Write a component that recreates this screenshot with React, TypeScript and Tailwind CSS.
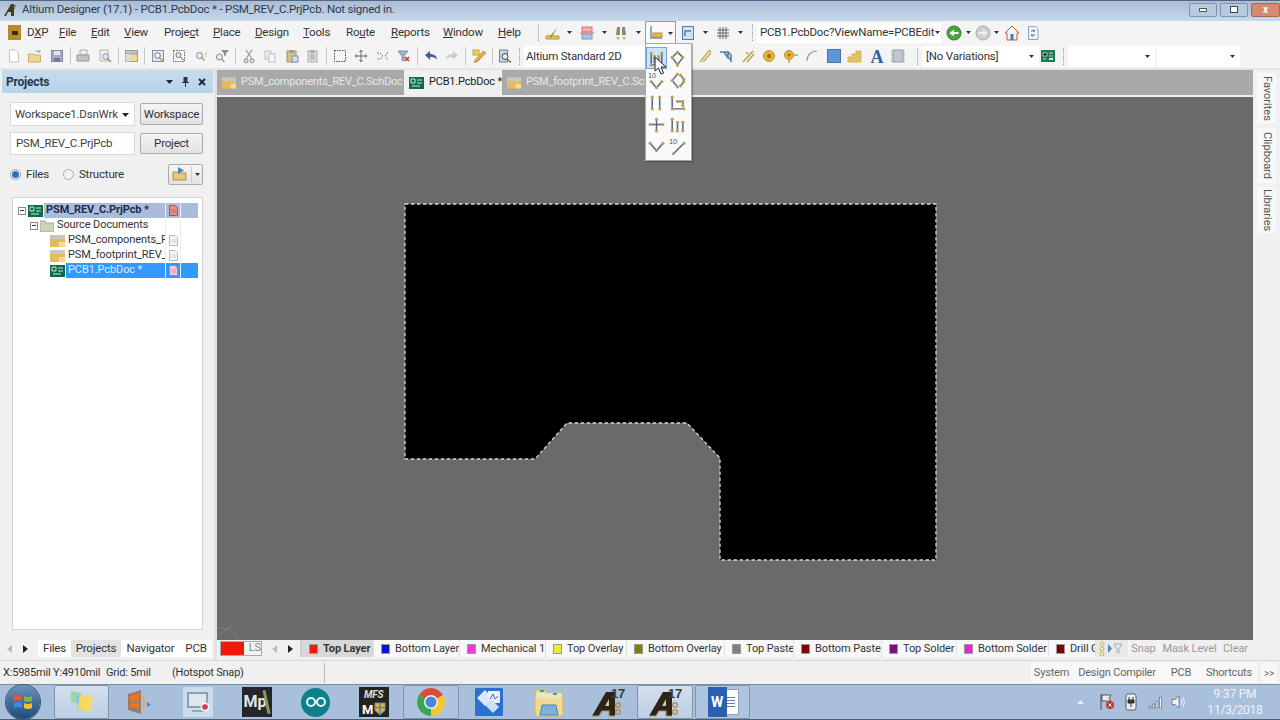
import type { ReactNode } from "react";

const ink = "text-[#3f3f3f]";

function Svg({ s = 16, children }: { s?: number; children: ReactNode }) {
  return (
    <svg width={s} height={s} viewBox="0 0 16 16" className="shrink-0">
      {children}
    </svg>
  );
}

function Arrow() {
  return (
    <svg width="5" height="3" viewBox="0 0 5 3" className="shrink-0">
      <path d="M0 0h5L2.5 3z" fill="#333" />
    </svg>
  );
}

function Grip() {
  return <div className="mx-[3px] h-[17px] w-[2px] shrink-0 border-l border-dotted border-[#9a9a9a]" />;
}

function Sep() {
  return <div className="mx-[2px] h-[18px] w-px shrink-0 bg-[#c8c8c8]" />;
}

const icons: Record<string, ReactNode> = {
  doc: <path d="M3.500 2h6l3 3v9h-9z" fill="#fff" stroke="#c4c4c4" />,
  open: (
    <>
      <path d="M1.500 6h5l1 1h6v7h-12z" fill="#ecd79a" stroke="#c9ab62" />
      <path d="M8 4q3-3 5 0m0-2v2h-2" fill="none" stroke="#9a9a9a" />
    </>
  ),
  save: (
    <>
      <rect x="2.500" y="2.500" width="11" height="11" fill="#a3acc2" stroke="#7f89a3" />
      <rect x="5" y="3" width="6" height="4" fill="#e4e7ee" />
      <rect x="5" y="10" width="6" height="3" fill="#6f7a95" />
    </>
  ),
  print: (
    <>
      <path d="M5 2h7v5H5z" fill="#eee" stroke="#aaa" />
      <path d="M2 7h12v6H2z" fill="#c4c4c4" stroke="#969696" />
    </>
  ),
  preview: (
    <>
      <path d="M3 2h8v11H3z" fill="#f6f6f6" stroke="#b0b0b0" />
      <circle cx="8.500" cy="8.500" r="3" fill="#d5e4ee" stroke="#8a9aa8" />
      <path d="M10.500 10.500l3.500 3.500" stroke="#a08f5a" strokeWidth="1.500" />
    </>
  ),
  folderdoc: (
    <>
      <rect x="2.500" y="2.500" width="12" height="11" fill="#f3da8c" stroke="#999" />
      <rect x="2.500" y="2.500" width="12" height="3.500" fill="#c4c4c4" stroke="#999" />
      <rect x="2.500" y="6" width="5" height="7.500" fill="#ddd" />
    </>
  ),
  zoomfit: (
    <>
      <rect x="2.500" y="2.500" width="11" height="11" fill="#e3e8f4" stroke="#7f90ac" />
      <circle cx="7.500" cy="7.500" r="2.800" fill="#f4f4f4" stroke="#777" />
      <path d="M9.500 9.500l3.500 3.500" stroke="#a8a04a" strokeWidth="1.400" />
    </>
  ),
  zoomsel: (
    <>
      <rect x="2.500" y="2.500" width="11" height="11" fill="none" stroke="#666" strokeDasharray="1.500 1" />
      <circle cx="7.500" cy="7" r="2.500" fill="#dde8ee" stroke="#777" />
      <path d="M9.500 9l3 3" stroke="#a8a04a" strokeWidth="1.400" />
    </>
  ),
  zoom: (
    <>
      <circle cx="6.500" cy="7.500" r="3" fill="#e6edf2" stroke="#888" />
      <path d="M8.500 9.500l3 3" stroke="#a8a04a" strokeWidth="1.400" />
      <path d="M13 4v1M13 8v1M12 6.500h2" stroke="#a8c07a" />
    </>
  ),
  zoomf: (
    <>
      <circle cx="5.500" cy="9" r="3" fill="#e6edf2" stroke="#888" />
      <path d="M7.500 11l3 3" stroke="#a8a04a" strokeWidth="1.400" />
      <path d="M7 2h8l-3 3.500V8l-2-.8V5.500z" fill="#8f8f8f" />
    </>
  ),
  cut: <path d="M5 2l5.500 8M11 2l-5.500 8M5 11a1.800 1.800 0 1 0 .1 0M11 11a1.800 1.800 0 1 0 .1 0" fill="none" stroke="#9a9a9a" strokeWidth="1.300" />,
  copy: (
    <>
      <rect x="3" y="3" width="6" height="8" fill="#eee" stroke="#c0c0c0" />
      <rect x="7" y="6" width="6" height="8" fill="#f6f6f6" stroke="#c0c0c0" />
    </>
  ),
  paste: (
    <>
      <rect x="3" y="3" width="9" height="11" fill="#d6c28a" stroke="#a29468" />
      <rect x="5.500" y="2" width="4" height="3" fill="#9a9a9a" />
      <rect x="8" y="8" width="6" height="6" fill="#d3deee" stroke="#7f92b0" />
    </>
  ),
  paste2: (
    <>
      <rect x="3" y="3" width="9" height="11" fill="#dcdcdc" stroke="#b0b0b0" />
      <rect x="5.500" y="2" width="4" height="3" fill="#aaa" />
      <path d="M5 7h5M5 9h5M5 11h5" stroke="#a0a0a0" />
    </>
  ),
  select: <rect x="2.500" y="2.500" width="11" height="11" fill="none" stroke="#555" strokeDasharray="1.500 1" />,
  move: <path d="M8 2v12M2 8h12M8 2L6.500 4M8 2l1.500 2M8 14l-1.500-2M8 14l1.500-2M2 8l2-1.500M2 8l2 1.500M14 8l-2-1.500M14 8l-2 1.500" fill="none" stroke="#5d6c80" />,
  cross: <path d="M2 5h3l3 3-3 3H2M13 4L10 8l3 4" fill="none" stroke="#777" strokeDasharray="2 1" />,
  filterx: (
    <>
      <path d="M2 3h10L8 8v5l-2-1V8z" fill="#a4b4cc" stroke="#8090a8" />
      <path d="M9 9l4 4M13 9l-4 4" stroke="#c33" strokeWidth="1.500" />
    </>
  ),
  undo: <path d="M2 7l5-4v3c4 0 7 2 7 6-2-3-4-3-7-3v3z" fill="#3f6291" />,
  redo: <path d="M14 7L9 3v3c-4 0-7 2-7 6 2-3 4-3 7-3v3z" fill="#c8ccd2" />,
  pencil: (
    <>
      <rect x="2" y="2" width="6" height="5" fill="#e9d36a" stroke="#c2a53a" />
      <path d="M12.500 3l2 2-8 8.500-3 1 1-3z" fill="#eeb04a" stroke="#c5842a" />
    </>
  ),
  board: (
    <>
      <path d="M2.500 2h8v12h-8z" fill="#cfd8e6" stroke="#6c7a90" />
      <circle cx="8" cy="8.500" r="3" fill="#e2ecf2" stroke="#445" />
      <path d="M10 11l4 3.500" stroke="#8a6a2a" strokeWidth="1.500" />
    </>
  ),
  check: (
    <>
      <path d="M2 14h13v-3H2z" fill="#e6c55a" stroke="#b0953a" />
      <path d="M2 6l4 5L14 2l-7 11z" fill="#7ea52c" />
    </>
  ),
  rows: (
    <>
      <rect x="3" y="2" width="10" height="5" fill="#f0b0b0" stroke="#c77" />
      <rect x="3" y="9" width="10" height="5" fill="#a9c4e4" stroke="#7a9ac4" />
      <path d="M1 8h14" stroke="#d66" />
    </>
  ),
  binoc: (
    <>
      <path d="M4 2h3v8H3zM9 2h3l1 8H9z" fill="#8a8a70" />
      <circle cx="5" cy="13" r="1.500" fill="#c9b26d" />
      <circle cx="11" cy="13" r="1.500" fill="#c9b26d" />
    </>
  ),
  ruler: (
    <>
      <path d="M3 1v12h11" fill="none" stroke="#6f8fb3" strokeWidth="1.500" />
      <rect x="5" y="8" width="9" height="4" fill="#e8b94e" stroke="#b98f2d" />
    </>
  ),
  stack: (
    <>
      <rect x="2.500" y="1.500" width="11" height="13" fill="#cfe0f2" stroke="#4f7fb5" />
      <path d="M5 11V6h6" fill="none" stroke="#4f7fb5" strokeWidth="1.500" />
    </>
  ),
  hash: <path d="M5 2v12M8 2v12M11 2v12M2 5h12M2 8h12M2 11h12" stroke="#666" />,
  back: (
    <>
      <circle cx="8" cy="8" r="7" fill="#4ca342" stroke="#2f7a2a" />
      <path d="M3.500 8L8 4.500V7h4.500v2H8v2.500z" fill="#fff" />
    </>
  ),
  fwd: (
    <>
      <circle cx="8" cy="8" r="7" fill="#d0d0d0" stroke="#aaa" />
      <path d="M12.500 8L8 4.500V7H3.500v2H8v2.500z" fill="#f2f2f2" />
    </>
  ),
  home: (
    <>
      <path d="M8 1L1 8h2v7h10V8h2z" fill="#f4f4f4" stroke="#c25a2a" />
      <rect x="6.500" y="9" width="3" height="6" fill="#3a7dc0" />
    </>
  ),
  refresh: (
    <>
      <path d="M3.500 1.500h7l2.500 2.500v10.500h-9.500z" fill="#f2f6fb" stroke="#7fa5cc" />
      <path d="M6 6h4L8 4.500M10 10H6l2 1.500" fill="none" stroke="#3a6ea5" />
    </>
  ),
  routeA: <path d="M3 14L12 3M6 14l8-9M12 2l2 2" fill="none" stroke="#c9a94e" strokeWidth="1.500" />,
  routeB: <path d="M2 4h8l3 3v7M10 3v6l3 3M6 4l4 6" fill="none" stroke="#4a7fb5" strokeWidth="1.600" />,
  routeC: <path d="M3 14L13 3M7 14l7-8M6 4l2 2" fill="none" stroke="#b7a34b" strokeWidth="1.600" />,
  pad: (
    <>
      <circle cx="8" cy="8" r="5.500" fill="#e2b32e" stroke="#c09a2a" />
      <circle cx="8" cy="8" r="2" fill="#a06a2a" />
    </>
  ),
  via: (
    <>
      <circle cx="6" cy="7" r="4.500" fill="#e2b32e" stroke="#b8902a" />
      <circle cx="6" cy="7" r="1.500" fill="#a06a2a" />
      <path d="M10 7h5M6 11v4" stroke="#c9a23a" strokeWidth="1.500" />
    </>
  ),
  arc: <path d="M3 13C3 7 7 3 13 3" fill="none" stroke="#99a" strokeWidth="1.200" />,
  fill: <rect x="1.500" y="1.500" width="13" height="13" fill="#5f96d4" stroke="#4477aa" />,
  poly: <path d="M1 14V9h4V6h4V3h5v11z" fill="#e4c164" stroke="#d0a948" strokeDasharray="2 .6" />,
  text: <text x="8" y="15" fontSize="18" fontWeight="700" textAnchor="middle" fill="#2f62a8" fontFamily="Liberation Serif">A</text>,
  chip: (
    <>
      <rect x="3" y="2" width="10" height="12" fill="#bfc6cf" stroke="#8f98a3" />
      <path d="M1 4h2M1 7h2M1 10h2M1 13h2M13 4h2M13 7h2M13 10h2M13 13h2" stroke="#9aa" />
    </>
  ),
  pcb: (
    <>
      <rect x="1" y="2" width="14" height="12" fill="#1f7a55" />
      <path d="M3 5h4v3H3zM9 5h4M9 8h4M3 11h3" stroke="#a8e0b8" />
      <rect x="9" y="10" width="4" height="2" fill="#ddd" />
    </>
  ),
};

function Ic({ k, w = "w-[21.5px]" }: { k: string; w?: string }) {
  return (
    <div className={`flex shrink-0 items-center justify-center ${w}`}>
      <Svg>{icons[k]}</Svg>
    </div>
  );
}

function Menu({ first, rest, pre = "", w }: { first: string; rest: string; pre?: string; w: string }) {
  return (
    <span className={`shrink-0 ${w}`}>
      {pre}
      <span className="underline underline-offset-1">{first}</span>
      {rest}
    </span>
  );
}

function FolderIcon({ w = 15 }: { w?: number }) {
  return (
    <svg width={w} height="12" viewBox="0 0 15 12" className="shrink-0">
      <rect width="15" height="12" fill="#e2bb5c" />
      <rect x="0" y="0" width="15" height="4" fill="#c9c6bd" />
      <rect x="9" y="7" width="6" height="5" fill="#f2d995" />
    </svg>
  );
}

function PcbIcon() {
  return (
    <svg width="15" height="12" viewBox="0 0 15 12" className="shrink-0">
      <rect width="15" height="12" fill="#0f6a4c" />
      <path d="M2 2h4v4H2zM8 3h5M8 6h5M3 9h8" stroke="#bff0cf" fill="none" />
    </svg>
  );
}

function DocTab({ label, active, w }: { label: string; active?: boolean; w: string }) {
  return (
    <div
      className={`flex h-full shrink-0 items-center gap-[5px] overflow-hidden whitespace-nowrap ${w} ${active ? "bg-[#f0f0f0] pl-[5px] text-[#222]" : "pl-[5px] text-[#e8e8e8]"}`}
    >
      {active ? <PcbIcon /> : <FolderIcon w={14} />}
      {label}
    </div>
  );
}

function PagedDoc({ fill, line }: { fill: string; line: string }) {
  return (
    <svg width="9" height="11" viewBox="0 0 9 11">
      <path d="M.5.5h5.500l2.500 2.500v7.500H.5z" fill={fill} stroke={line} />
      <path d="M2 5h5M2 7h5" stroke={line} strokeWidth=".6" />
    </svg>
  );
}

function TreeRow({ indent, expander, icon, label, sel, active, doc, bold }: { indent: string; expander?: boolean; icon: ReactNode; label: string; sel?: boolean; active?: boolean; doc?: ReactNode; bold?: boolean }) {
  const bg = active ? "bg-[#3399ff]" : sel ? "bg-[#aabbdc]" : "";
  return (
    <div className="flex h-[15px] items-center">
      <div className={`flex h-full w-[147px] items-center overflow-hidden whitespace-nowrap ${indent}`}>
        {expander && (
          <div className="mr-[2px] flex h-[8px] w-[8px] shrink-0 items-center justify-center border border-[#8a8a8a] bg-white">
            <div className="h-px w-[4px] bg-[#333]" />
          </div>
        )}
        {icon}
        <div className={`ml-[1px] flex h-[15px] flex-1 items-center pl-[2px] ${bold ? "font-bold text-[#1d2a4d]" : ""} ${active ? "text-[#d6ecff]" : ""} ${bg}`}>
          {label}
        </div>
      </div>
      <div className={`flex h-full w-[16px] items-center justify-center border-x border-[#ececec] ${bg}`}>{doc}</div>
      <div className={`h-full w-[17px] ${bg}`} />
    </div>
  );
}

function LayerTab({ color, label, w, active }: { color: string; label: string; w: string; active?: boolean }) {
  return (
    <div
      className={`flex h-full shrink-0 items-center gap-[5px] overflow-hidden whitespace-nowrap border-r border-[#e2e2e2] pl-[7px] ${w} ${active ? "bg-[#d8d8d8] font-bold" : "bg-[#f8f8f8]"}`}
    >
      <div className="h-[10px] w-[9px] shrink-0 border border-[#999]" style={{ backgroundColor: color }} />
      <span className="pt-px">{label}</span>
    </div>
  );
}

function Nav() {
  return (
    <div className="flex shrink-0 items-center gap-[11px]">
      <svg width="5" height="8" viewBox="0 0 5 8"><path d="M5 0v8L0 4z" fill="#bbb" /></svg>
      <svg width="5" height="8" viewBox="0 0 5 8"><path d="M0 0v8l5-4z" fill="#222" /></svg>
    </div>
  );
}

function TaskBtn({ w, look, children }: { w: string; look?: "active" | "open"; children: ReactNode }) {
  return (
    <div
      className={`flex h-full shrink-0 items-center justify-center ${w} ${look === "active" ? "rounded-[2px] border border-[#7f94ad] bg-gradient-to-b from-[#d4dfec] to-[#bccfe3]" : look === "open" ? "rounded-[2px] border border-[#7f94ad] bg-[#afc5df]" : ""}`}
    >
      {children}
    </div>
  );
}

function A17() {
  return (
    <svg width="36" height="32" viewBox="0 0 36 32">
      <path d="M2 30L16 6h9v24h-6v-5h-7l-3 5z" fill="#2d2415" />
      <path d="M15 20h4v-7z" fill="#cfc6ac" />
      <path d="M2 30h7l3-5h7v5h6" fill="none" stroke="#a8935a" strokeWidth="1.200" />
      <text x="21" y="12" fontSize="13" fontWeight="700" fill="#3c3c3c" fontFamily="Liberation Sans">17</text>
      <circle cx="28" cy="19" r="2.300" fill="none" stroke="#a8935a" strokeWidth="1.500" />
      <circle cx="28" cy="26" r="2.300" fill="none" stroke="#a8935a" strokeWidth="1.500" />
    </svg>
  );
}

function Pop({ children, active }: { children: ReactNode; active?: boolean }) {
  return (
    <div className={`flex h-[22px] w-[21px] items-center justify-center ${active ? "border border-[#6fa5d8] bg-[#cfe4f7]" : ""}`}>
      {children}
    </div>
  );
}

function Track({ d, tag }: { d: string; tag?: boolean }) {
  const pts = [...d.matchAll(/[ML](\d+) (\d+)/g)].map((m) => [Number(m[1]), Number(m[2])]);
  return (
    <Svg s={17}>
      <path d={d} fill="none" stroke="#56667c" strokeWidth="1.400" />
      {pts.map(([x, y], i) => (
        <circle key={i} cx={x} cy={y} r="1.500" fill="#b9a25f" />
      ))}
      {tag && (
        <text x="0" y="6" fontSize="7" fill="#555" fontFamily="Liberation Sans">10</text>
      )}
    </Svg>
  );
}

export default function App() {
  return (
    <div className="relative flex h-[720px] w-[1280px] flex-col overflow-hidden bg-[#f0f0f0] font-['Roboto',sans-serif] text-[11.5px] tracking-[-0.2px] text-[#333]">
      {/* Title bar */}
      <header className="flex h-[21px] shrink-0 items-center justify-between border-t border-[#55667d] bg-gradient-to-b from-[#a8bcd6] to-[#c8d9ea] pb-[3px] pl-[4px] pr-0">
        <div className="flex items-center gap-[4px]">
          <svg width="14" height="14" viewBox="0 0 14 14" className="shrink-0">
            <path d="M0 13L7 1h3v12H7V9H4l-2 4z" fill="#4a3a20" />
            <text x="9" y="6" fontSize="6" fill="#333">7</text>
          </svg>
          <span className="text-[#2c3a4c]">Altium Designer (17.1) - PCB1.PcbDoc * - PSM_REV_C.PrjPcb. Not signed in.</span>
        </div>
        <div className="flex items-center gap-[3px]">
          <div className="flex h-[14px] w-[28px] items-center justify-center rounded-[2px] border border-[#7f93ab] bg-[#b8cade]">
            <div className="h-[4px] w-[8px] border border-[#556] bg-white" />
          </div>
          <div className="flex h-[14px] w-[28px] items-center justify-center rounded-[2px] border border-[#7f93ab] bg-[#b8cade]">
            <div className="h-[7px] w-[8px] border border-[#445] bg-white" />
          </div>
          <div className="flex h-[14px] w-[29px] items-center justify-center rounded-[2px] border border-[#a06a50] bg-[#d68a6f] text-[10px] font-bold leading-none text-white">x</div>
        </div>
      </header>

      {/* Menu bar */}
      <div className="flex h-[23px] shrink-0 items-center bg-[#f4f4f4] pl-[8px]">
        <div className="mr-[6px] flex h-[15px] w-[13px] shrink-0 items-center justify-center bg-[#b98a2c]">
          <div className="h-[4px] w-[6px] bg-[#3d2b10]" />
        </div>
        <span className="w-[32px] shrink-0">D<span className="underline underline-offset-1">X</span>P</span>
        <Menu w="w-[32px]" first="F" rest="ile" />
        <Menu w="w-[33px]" first="E" rest="dit" />
        <Menu w="w-[40px]" first="V" rest="iew" />
        <Menu w="w-[49px]" pre="Proje" first="c" rest="t" />
        <Menu w="w-[42px]" first="P" rest="lace" />
        <Menu w="w-[48px]" first="D" rest="esign" />
        <Menu w="w-[43px]" first="T" rest="ools" />
        <Menu w="w-[45px]" pre="Ro" first="u" rest="te" />
        <Menu w="w-[52px]" first="R" rest="eports" />
        <Menu w="w-[55px]" first="W" rest="indow" />
        <Menu w="w-[37px]" first="H" rest="elp" />
        <Grip />
        <Ic k="check" w="w-[18px]" />
        <div className="mx-[6px]"><Arrow /></div>
        <Ic k="rows" w="w-[18px]" />
        <div className="mx-[5.500px]"><Arrow /></div>
        <Ic k="binoc" w="w-[18px]" />
        <div className="ml-[6px] mr-[4px]"><Arrow /></div>
        <div className="flex h-[23px] w-[31px] shrink-0 items-center gap-[3px] border-x border-t border-[#999] bg-[#f8f8f8] pl-[1px]">
          <Ic k="ruler" w="w-[18px]" />
          <Arrow />
        </div>
        <div className="w-[3px]" />
        <Ic k="stack" w="w-[18px]" />
        <div className="mx-[6px]"><Arrow /></div>
        <Ic k="hash" w="w-[18px]" />
        <div className="mx-[6px]"><Arrow /></div>
        <Grip />
        <div className="flex h-[20px] w-[184px] shrink-0 items-center justify-between bg-white pl-[3px] pr-[1px]">
          <span className="whitespace-nowrap">PCB1.PcbDoc?ViewName=PCBEdit</span>
          <Arrow />
        </div>
        <div className="w-[4px]" />
        <Ic k="back" w="w-[18px]" />
        <div className="mx-[3px]"><Arrow /></div>
        <Ic k="fwd" w="w-[18px]" />
        <div className="mx-[2px]"><Arrow /></div>
        <div className="w-[2px]" />
        <Ic k="home" w="w-[18px]" />
        <div className="w-[3px]" />
        <Ic k="refresh" w="w-[18px]" />
      </div>

      {/* Main toolbar */}
      <div className="flex h-[24px] shrink-0 items-center bg-[#f4f4f4] pl-[3px]">
        <Ic k="doc" />
        <Ic k="open" />
        <Ic k="save" />
        <Sep />
        <Ic k="print" />
        <Ic k="preview" />
        <Sep />
        <Ic k="folderdoc" />
        <Sep />
        <Ic k="zoomfit" />
        <Ic k="zoomsel" />
        <Ic k="zoom" />
        <Ic k="zoomf" />
        <Sep />
        <Ic k="cut" />
        <Ic k="copy" />
        <Ic k="paste" />
        <Ic k="paste2" />
        <Sep />
        <Ic k="select" />
        <Ic k="move" />
        <Ic k="cross" />
        <Ic k="filterx" />
        <Sep />
        <Ic k="undo" />
        <Ic k="redo" />
        <Sep />
        <Ic k="pencil" />
        <Sep />
        <Ic k="board" />
        <Grip />
        <div className="flex h-[21px] w-[161px] shrink-0 items-center bg-white pl-[2px] pt-px">Altium Standard 2D</div>
        <div className="w-[9px]" />
        <Ic k="routeA" />
        <Ic k="routeB" />
        <Ic k="routeC" />
        <Ic k="pad" />
        <Ic k="via" />
        <Ic k="arc" />
        <Ic k="fill" />
        <Ic k="poly" />
        <Ic k="text" />
        <Ic k="chip" />
        <div className="w-[5px]" />
        <Grip />
        <div className="flex h-[21px] w-[117px] shrink-0 items-center justify-between bg-white pl-[4px] pr-[5px] pt-px">
          [No Variations]
          <Arrow />
        </div>
        <Ic k="pcb" w="w-[18px]" />
        <div className="w-[3px]" />
        <Grip />
        <div className="flex h-[21px] w-[87px] shrink-0 items-center justify-end bg-white pr-[5px]"><Arrow /></div>
        <div className="w-[2px]" />
        <div className="flex h-[21px] w-[83px] shrink-0 items-center justify-end bg-white pr-[5px]"><Arrow /></div>
      </div>

      {/* Workspace */}
      <div className="flex h-[592px] shrink-0 items-stretch border-t-2 border-[#e4e4e4]">
        {/* Projects panel */}
        <aside className="flex w-[217px] shrink-0 flex-col border-r-[3px] border-[#e2e2e2] pl-[2px] pr-[1px]">
          <div className="flex h-[23px] shrink-0 items-center justify-between bg-gradient-to-b from-[#c6dcee] to-[#b6d2e8] pl-[4px] pr-[7px]">
            <span className="text-[12px] font-bold text-[#24364a]">Projects</span>
            <div className="flex items-center gap-[9px]">
              <svg width="7" height="4" viewBox="0 0 7 4"><path d="M0 0h7L3.500 4z" fill="#223" /></svg>
              <svg width="7" height="10" viewBox="0 0 7 10"><path d="M1.500 0h4v5H7v1H4v4H3V6H0V5h1.500z" fill="#334" /></svg>
              <svg width="8" height="8" viewBox="0 0 8 8"><path d="M1 1l6 6M7 1L1 7" stroke="#223" strokeWidth="1.800" /></svg>
            </div>
          </div>
          <div className="flex flex-1 flex-col bg-[#f0f0f0] pl-[8px] pr-[10px] pt-[9px]">
            <div className="flex h-[24px] items-center gap-[5px]">
              <div className={`flex h-full w-[125px] items-center justify-between border border-[#d9d9d9] bg-white pl-[4px] pr-[5px] pt-px ${ink}`}>
                Workspace1.DsnWrk
                <svg width="7" height="4" viewBox="0 0 7 4"><path d="M0 0h7L3.500 4z" fill="#222" /></svg>
              </div>
              <div className="flex h-[22px] w-[63px] items-center justify-center rounded-[2px] border border-[#aaa] bg-gradient-to-b from-[#f4f4f4] to-[#e2e2e2] pt-px">Workspace</div>
            </div>
            <div className="mt-[6px] flex h-[23px] items-center gap-[5px]">
              <div className={`flex h-full w-[125px] items-center border border-[#d9d9d9] bg-white pl-[5px] pt-px ${ink}`}>PSM_REV_C.PrjPcb</div>
              <div className="flex h-[21px] w-[63px] items-center justify-center rounded-[2px] border border-[#aaa] bg-gradient-to-b from-[#f4f4f4] to-[#e2e2e2] pt-px">Project</div>
            </div>
            <div className="mt-[8px] flex h-[22px] items-center">
              <div className="flex h-[11px] w-[11px] items-center justify-center rounded-full border border-[#7f9db9] bg-white">
                <div className="h-[7px] w-[7px] rounded-full bg-[#2f6fb0]" />
              </div>
              <span className="ml-[5px] pt-px">Files</span>
              <div className="ml-[14px] h-[11px] w-[11px] rounded-full border border-[#aaa] bg-[#f2f2f2]" />
              <span className="ml-[5px] pt-px">Structure</span>
              <div className="ml-auto flex h-[21px] w-[35px] items-center rounded-[2px] border border-[#aaa] bg-gradient-to-b from-[#f6f6f6] to-[#e2e2e2]">
                <div className="flex w-[23px] justify-center border-r border-[#ccc]">
                  <Svg>
                    <path d="M1 6h5l1 1h7v7H1z" fill="#eac67a" stroke="#b38f3a" />
                    <path d="M6 1v7l6-3.500z" fill="#4a86c6" />
                  </Svg>
                </div>
                <div className="flex flex-1 justify-center"><Arrow /></div>
              </div>
            </div>
            {/* Project tree */}
            <div className="ml-[2px] mt-[12px] flex-1 border border-[#d4d4d4] bg-white pl-[5px] pt-[5px] text-[11px] tracking-[-0.1px]">
              <TreeRow
                indent=""
                expander
                sel
                bold
                doc={<PagedDoc fill="#e98c8c" line="#b84a4a" />}
                label="PSM_REV_C.PrjPcb *"
                icon={<PcbIcon />}
              />
              <TreeRow
                indent="pl-[12px]"
                expander
                label="Source Documents"
                icon={
                  <svg width="14" height="12" viewBox="0 0 14 12" className="shrink-0">
                    <path d="M0 1h5l1 2h8v9H0z" fill="#c9d6b6" stroke="#9aa" />
                  </svg>
                }
              />
              <TreeRow indent="pl-[32px]" doc={<PagedDoc fill="#f7f7f7" line="#b5b5b5" />} label="PSM_components_R" icon={<FolderIcon />} />
              <TreeRow indent="pl-[32px]" doc={<PagedDoc fill="#f7f7f7" line="#b5b5b5" />} label="PSM_footprint_REV_" icon={<FolderIcon />} />
              <TreeRow indent="pl-[32px]" active doc={<PagedDoc fill="#f4c6d6" line="#c77" />} label="PCB1.PcbDoc *" icon={<PcbIcon />} />
            </div>
            <div className="h-[10px]" />
          </div>
          {/* Panel tabs */}
          <div className="flex h-[17px] shrink-0 items-center pl-[5px]">
            <Nav />
            <div className="ml-[10px] flex h-full items-center pt-0">
              <div className="flex h-full w-[33px] items-center justify-center bg-white pt-px">Files</div>
              <div className="flex h-full w-[50px] items-center justify-center bg-[#e2e2e2] pt-px">Projects</div>
              <div className="flex h-full w-[59px] items-center justify-center bg-white pt-px">Navigator</div>
              <div className="flex h-full w-[32px] items-center justify-center bg-white pt-px">PCB</div>
            </div>
          </div>
          <div className="h-[3px] shrink-0" />
        </aside>

        {/* Document area */}
        <main className="flex min-w-0 flex-1 flex-col">
          <div className="flex h-[25px] shrink-0 items-center bg-[#a9a9a9] text-[11px]">
            <DocTab label="PSM_components_REV_C.SchDoc" w="w-[187px]" />
            <DocTab label="PCB1.PcbDoc *" active w="w-[98px]" />
            <DocTab label="PSM_footprint_REV_C.SchDoc" w="w-[180px]" />
          </div>
          <div className="h-[2px] shrink-0 bg-[#efefef]" />
          <div className="min-h-0 flex-1 bg-[#6b6a69]">
            <svg viewBox="217 97 1036 543" className="block h-full w-full">
              <path d="M405 204H936V560H720V458L687 423H567L535 459H405Z" fill="#000" stroke="#d8d8d8" strokeWidth="1.300" strokeDasharray="3.500 2.500" />
              <path d="M217 637L232 625M217 628C228 628 238 632 238 640" fill="none" stroke="#8a8a8a" strokeWidth=".7" />
            </svg>
          </div>
          {/* Layer tabs */}
          <div className="flex h-[17px] shrink-0 items-center bg-[#f0f0f0] text-[11px] tracking-[-0.1px]">
            <div className="ml-[3px] flex h-[15px] w-[42px] shrink-0 items-center border border-[#aaa] bg-[#f4f4f4]">
              <div className="h-full w-[24px] bg-[#ee1a0a]" />
              <span className="pl-[5px] text-[#888]">LS</span>
            </div>
            <div className="ml-[10px]"><Nav /></div>
            <div className="ml-[7px] h-full w-[2px] bg-[#d0d0d0]" />
            <LayerTab color="#ee1a0a" label="Top Layer" w="w-[72px]" active />
            <LayerTab color="#0a12d8" label="Bottom Layer" w="w-[86px]" />
            <LayerTab color="#ee3ad8" label="Mechanical 1" w="w-[86px]" />
            <LayerTab color="#f0ea3a" label="Top Overlay" w="w-[81px]" />
            <LayerTab color="#808000" label="Bottom Overlay" w="w-[98px]" />
            <LayerTab color="#808080" label="Top Paste" w="w-[69px]" />
            <LayerTab color="#80000a" label="Bottom Paste" w="w-[88px]" />
            <LayerTab color="#800a80" label="Top Solder" w="w-[75px]" />
            <LayerTab color="#ee20d8" label="Bottom Solder" w="w-[92px]" />
            <LayerTab color="#800000" label="Drill Guide" w="w-[47px]" />
            <div className="flex h-full w-[32px] shrink-0 items-center bg-[#e9e9e9] pl-[3px]">
              <svg width="26" height="15" viewBox="0 0 26 15">
                <circle cx="3" cy="3" r="2" fill="none" stroke="#c9b84a" />
                <circle cx="3" cy="8" r="2" fill="none" stroke="#c9b84a" />
                <circle cx="3" cy="13" r="2" fill="none" stroke="#c9b84a" />
                <path d="M9 3v9l4-4.500z" fill="#4f87c4" />
                <path d="M15 3h8l-3 5v4l-2-1V8z" fill="none" stroke="#9fb0c4" />
              </svg>
            </div>
            <div className="flex h-full w-[30px] shrink-0 items-center justify-center border-l border-[#f8f8f8] pt-px text-[#999]">Snap</div>
            <div className="flex h-full w-[62px] shrink-0 items-center justify-center border-l border-[#f8f8f8] pt-px text-[#999]">Mask Level</div>
            <div className="flex h-full w-[30px] shrink-0 items-center justify-center border-l border-[#f8f8f8] pt-px text-[#999]">Clear</div>
          </div>
          <div className="h-[3px] shrink-0" />
        </main>

        {/* Side rail */}
        <div className="flex w-[27px] shrink-0 flex-col items-end bg-[#f0f0f0] pr-[4px] pt-[3px] text-[11px] tracking-normal text-[#555]">
          <div className="flex h-[50px] w-[19px] items-center justify-center bg-[#f8f8f8] [writing-mode:vertical-rl]">Favorites</div>
          <div className="mt-[5px] flex h-[55px] w-[19px] items-center justify-center bg-[#f8f8f8] [writing-mode:vertical-rl]">Clipboard</div>
          <div className="mt-[4px] flex h-[46px] w-[19px] items-center justify-center bg-[#f8f8f8] [writing-mode:vertical-rl]">Libraries</div>
        </div>
      </div>

      {/* Status bar */}
      <div className="flex h-[24px] shrink-0 items-center justify-between border-t border-[#d8d8d8] bg-[#f0f0f0] pl-[3px] text-[11px]">
        <div className="flex h-full items-center pt-px">
          <span className="w-[103px] whitespace-nowrap">X:5985mil Y:4910mil</span>
          <span className="w-[66px] whitespace-nowrap">Grid: 5mil</span>
          <span className="w-[152px] whitespace-nowrap">(Hotspot Snap)</span>
          <div className="h-[20px] w-px bg-[#bbb]" />
        </div>
        <div className="flex h-[20px] items-center pr-[3px] text-[#666]">
          <div className="flex h-full w-[43px] items-center justify-center bg-[#f8f8f8] pt-px">System</div>
          <div className="flex h-full w-[88px] items-center justify-center bg-[#f8f8f8] pt-px">Design Compiler</div>
          <div className="flex h-full w-[40px] items-center justify-center bg-[#f8f8f8] pt-px">PCB</div>
          <div className="flex h-full w-[56px] items-center justify-center bg-[#f8f8f8] pt-px">Shortcuts</div>
          <div className="ml-[4px] flex h-full w-[16px] items-center justify-center bg-[#f8f8f8] pt-px text-[10px]">&gt;&gt;</div>
        </div>
      </div>

      {/* Taskbar */}
      <footer className="flex h-[36px] shrink-0 items-center border-y border-t-[#7d8da0] border-b-[#4f5f72] bg-[#a8c0dc] pl-[6px]">
        <div className="mr-[14px] flex h-[34px] w-[34px] shrink-0 items-center justify-center rounded-full bg-gradient-to-b from-[#6a93bd] to-[#1f4a78] ring-1 ring-[#3b5570]">
          <svg width="20" height="20" viewBox="0 0 20 20">
            <path d="M1 4q4-2 8 0v5q-4-2-8 0z" fill="#e8562a" />
            <path d="M11 4q4 2 8 0v5q-4 2-8 0z" fill="#7ab93a" />
            <path d="M1 11q4-2 8 0v5q-4-2-8 0z" fill="#3a8fd8" />
            <path d="M11 11q4 2 8 0v5q-4 2-8 0z" fill="#f2c12e" />
          </svg>
        </div>
        <TaskBtn w="w-[55px]" look="active">
          <svg width="30" height="28" viewBox="0 0 30 28">
            <path d="M4 3l11 2-2 11-9-2z" fill="#98d8a8" />
            <path d="M9 9l5-2 2 14-5 1z" fill="#8ac4ea" />
            <path d="M13 7l13 2-3 15-12-3z" fill="#f6d95e" />
          </svg>
        </TaskBtn>
        <TaskBtn w="w-[60px]">
          <svg width="30" height="28" viewBox="0 0 30 28">
            <path d="M4 6l13-4v24L4 22z" fill="#9a7a68" />
            <path d="M6 8l9-3v7l-9 2zM6 16l9-2v6l-9-1z" fill="#e8762a" />
            <path d="M17 7q6 5 2 15" fill="none" stroke="#c9b27a" strokeWidth="2" />
            <path d="M23 14l4 2.500-4 2.500z" fill="#4a86c6" />
          </svg>
        </TaskBtn>
        <TaskBtn w="w-[58px]">
          <div className="flex h-[30px] w-[30px] items-center justify-center bg-[#c8ddf0]">
            <svg width="24" height="24" viewBox="0 0 24 24">
              <rect x="2" y="3" width="19" height="14" fill="#dfe6ee" stroke="#7d8896" strokeWidth="1.500" />
              <path d="M6 21h12" stroke="#8a94a2" strokeWidth="1.500" />
              <circle cx="19" cy="17" r="4.500" fill="#f4f4f4" />
              <circle cx="19" cy="17" r="2.800" fill="#d43a4a" />
            </svg>
          </div>
        </TaskBtn>
        <TaskBtn w="w-[59px]">
          <div className="relative flex h-[30px] w-[30px] items-center justify-start bg-[#23262a] pl-[2px] text-[16px] font-bold tracking-normal text-[#e4e4e4]">
            Mp
            <div className="absolute right-[4px] top-[3px] h-[24px] w-[3px] -rotate-12 bg-[#8a9a5a]" />
          </div>
        </TaskBtn>
        <TaskBtn w="w-[59px]">
          <div className="flex h-[29px] w-[29px] items-center justify-center rounded-full bg-[#0f7f8c]">
            <svg width="22" height="12" viewBox="0 0 22 12">
              <circle cx="6" cy="6" r="4" fill="none" stroke="#e6f6f6" strokeWidth="2" />
              <circle cx="16" cy="6" r="4" fill="none" stroke="#e6f6f6" strokeWidth="2" />
            </svg>
          </div>
        </TaskBtn>
        <TaskBtn w="w-[58px]">
          <div className="relative flex h-[30px] w-[30px] flex-col items-center justify-end bg-[#23251d] pb-[1px] text-[13px] font-bold leading-none text-white">
            <span className="absolute left-[5px] top-[3px] text-[10px] italic text-[#ddd]">MFS</span>
            <span className="flex items-center gap-[1px]">
              M
              <svg width="12" height="14" viewBox="0 0 13 15">
                <path d="M1 1h11v8l-5.500 5L1 9z" fill="#d8b53a" stroke="#5f87c4" />
                <path d="M6.500 1v13M1 6h11" stroke="#4f7fc4" strokeWidth="1.500" />
              </svg>
            </span>
          </div>
        </TaskBtn>
        <TaskBtn w="w-[56px]" look="open">
          <svg width="30" height="30" viewBox="0 0 30 30">
            <path d="M15 15L2.900 8A14 14 0 0 1 27.100 8Z" fill="#dd4b3a" />
            <path d="M15 15L2.900 8A14 14 0 0 0 15 29Z" fill="#3aa457" />
            <path d="M15 15L27.100 8A14 14 0 0 1 15 29Z" fill="#f5c92e" />
            <circle cx="15" cy="15" r="7" fill="#f4f4f4" />
            <circle cx="15" cy="15" r="5.500" fill="#4a86d8" />
          </svg>
        </TaskBtn>
        <TaskBtn w="w-[60px]">
          <svg width="30" height="30" viewBox="0 0 30 30">
            <rect x="1" y="1" width="28" height="28" rx="1" fill="#2b6fd0" />
            <path d="M3 11L11 3l8 8-8 8z" fill="#d9e8f8" />
            <path d="M14 4h12v12H14z" fill="#e8f0fa" />
            <path d="M16 12l3-5 2 5 3-3" fill="none" stroke="#2b6fd0" />
            <path d="M11 18l6-6 8 8-6 6z" fill="#cfe0f4" />
          </svg>
        </TaskBtn>
        <TaskBtn w="w-[59px]">
          <svg width="32" height="30" viewBox="0 0 32 30">
            <path d="M2 3h10l2 3h16v23H2z" fill="#f2da90" stroke="#d0b566" />
            <path d="M4 6h24v5H4z" fill="#e8e4d8" />
            <path d="M7 4h4M20 7h4" stroke="#5a9a5a" strokeWidth="2" />
            <path d="M9 18h14l2 10H7z" fill="#7ab2dc" stroke="#4a86b8" />
          </svg>
        </TaskBtn>
        <TaskBtn w="w-[59px]"><A17 /></TaskBtn>
        <TaskBtn w="w-[56px]" look="active"><A17 /></TaskBtn>
        <div className="w-[2px] shrink-0" />
        <TaskBtn w="w-[55px]" look="open">
          <div className="relative h-[30px] w-[30px]">
            <div className="absolute right-0 top-[3px] flex h-[24px] w-[18px] flex-col justify-center gap-[2px] bg-white px-[3px] ring-1 ring-[#8fa0b8]">
              <div className="h-px bg-[#5f7fb0]" />
              <div className="h-px bg-[#5f7fb0]" />
              <div className="h-px bg-[#5f7fb0]" />
              <div className="h-px bg-[#5f7fb0]" />
            </div>
            <div className="absolute left-0 top-0 flex h-[30px] w-[19px] items-center justify-center bg-[#2b5fb0] text-[14px] font-bold text-white">W</div>
          </div>
        </TaskBtn>
        {/* Tray */}
        <div className="ml-auto flex items-center pr-[17px]">
          <svg width="7" height="4" viewBox="0 0 7 4" className="mr-[16px]"><path d="M0 4h7L3.500 0z" fill="#e8eef6" /></svg>
          <svg width="15" height="18" viewBox="0 0 15 18" className="mr-[9px]">
            <path d="M1 1v16M2 2h9l-2 3 2 3H2z" fill="#eee" stroke="#333" strokeWidth=".8" />
            <circle cx="10" cy="12" r="4" fill="#c8382e" />
            <path d="M8.500 10.500l3 3M11.500 10.500l-3 3" stroke="#fff" />
          </svg>
          <svg width="14" height="18" viewBox="0 0 14 18" className="mr-[10px]">
            <rect x="2" y="1" width="10" height="16" rx="2" fill="#e8edf2" stroke="#444" strokeWidth=".8" />
            <path d="M5 4v3M9 4v3M4 7h6v3H4zM7 10v4" stroke="#333" fill="#333" />
          </svg>
          <svg width="15" height="14" viewBox="0 0 15 14" className="mr-[8px]">
            <path d="M1 11h2v2H1zM4.500 9h2v4h-2zM8 6h2v7H8zM11.500 2h2v11h-2z" fill="#f0f4f8" stroke="#445" strokeWidth=".5" />
          </svg>
          <svg width="16" height="16" viewBox="0 0 16 16" className="mr-[20px]">
            <path d="M1 5.500h3L8 2v12L4 10.500H1z" fill="#f0f4f8" stroke="#445" strokeWidth=".6" />
            <path d="M10 5q2 3 0 6M12 3.500q3 4.500 0 9" fill="none" stroke="#f0f4f8" />
          </svg>
          <div className="flex w-[56px] flex-col items-center text-[12px] leading-[16px] text-[#eef3f8]">
            <span className="whitespace-nowrap">9:37 PM</span>
            <span className="whitespace-nowrap">11/3/2018</span>
          </div>
        </div>
      </footer>

      {/* Align dropdown, open over the toolbar */}
      <div className="absolute left-[645px] top-[43px] z-10 grid grid-cols-2 border border-[#a8a8a8] bg-[#fafafa] py-[3px] pr-[3px] shadow-[1px_1px_1px_rgba(0,0,0,0.25)]">
        <Pop active><Track d="M3 3L3 14L9 14M13 3L13 14M6 6L6 11M10 6L10 11" /></Pop>
        <Pop><Track d="M3 7L8 14M3 7L8 2L13 7L8 14" /></Pop>
        <Pop><Track d="M3 9L8 15L13 9" tag /></Pop>
        <Pop><Track d="M8 2L3 8L8 14M11 3L14 7M11 13L14 9" /></Pop>
        <Pop><Track d="M4 3L4 14M11 3L11 14" /></Pop>
        <Pop><Track d="M3 3L3 14L14 14M8 7L13 7L13 11" /></Pop>
        <Pop><Track d="M8 3L8 14M2 8L14 8" /></Pop>
        <Pop><Track d="M3 3L3 14M8 6L8 14M13 6L13 14" /></Pop>
        <Pop><Track d="M2 5L8 12L14 5" /></Pop>
        <Pop><Track d="M4 15L14 5" tag /></Pop>
      </div>

      {/* Mouse pointer */}
      <svg width="13" height="19" viewBox="0 0 13 19" className="absolute left-[654px] top-[56px] z-20">
        <path d="M1 1v14l3.500-3 2.500 6 2.500-1-2.500-6H12z" fill="#fff" stroke="#222" />
      </svg>
    </div>
  );
}
